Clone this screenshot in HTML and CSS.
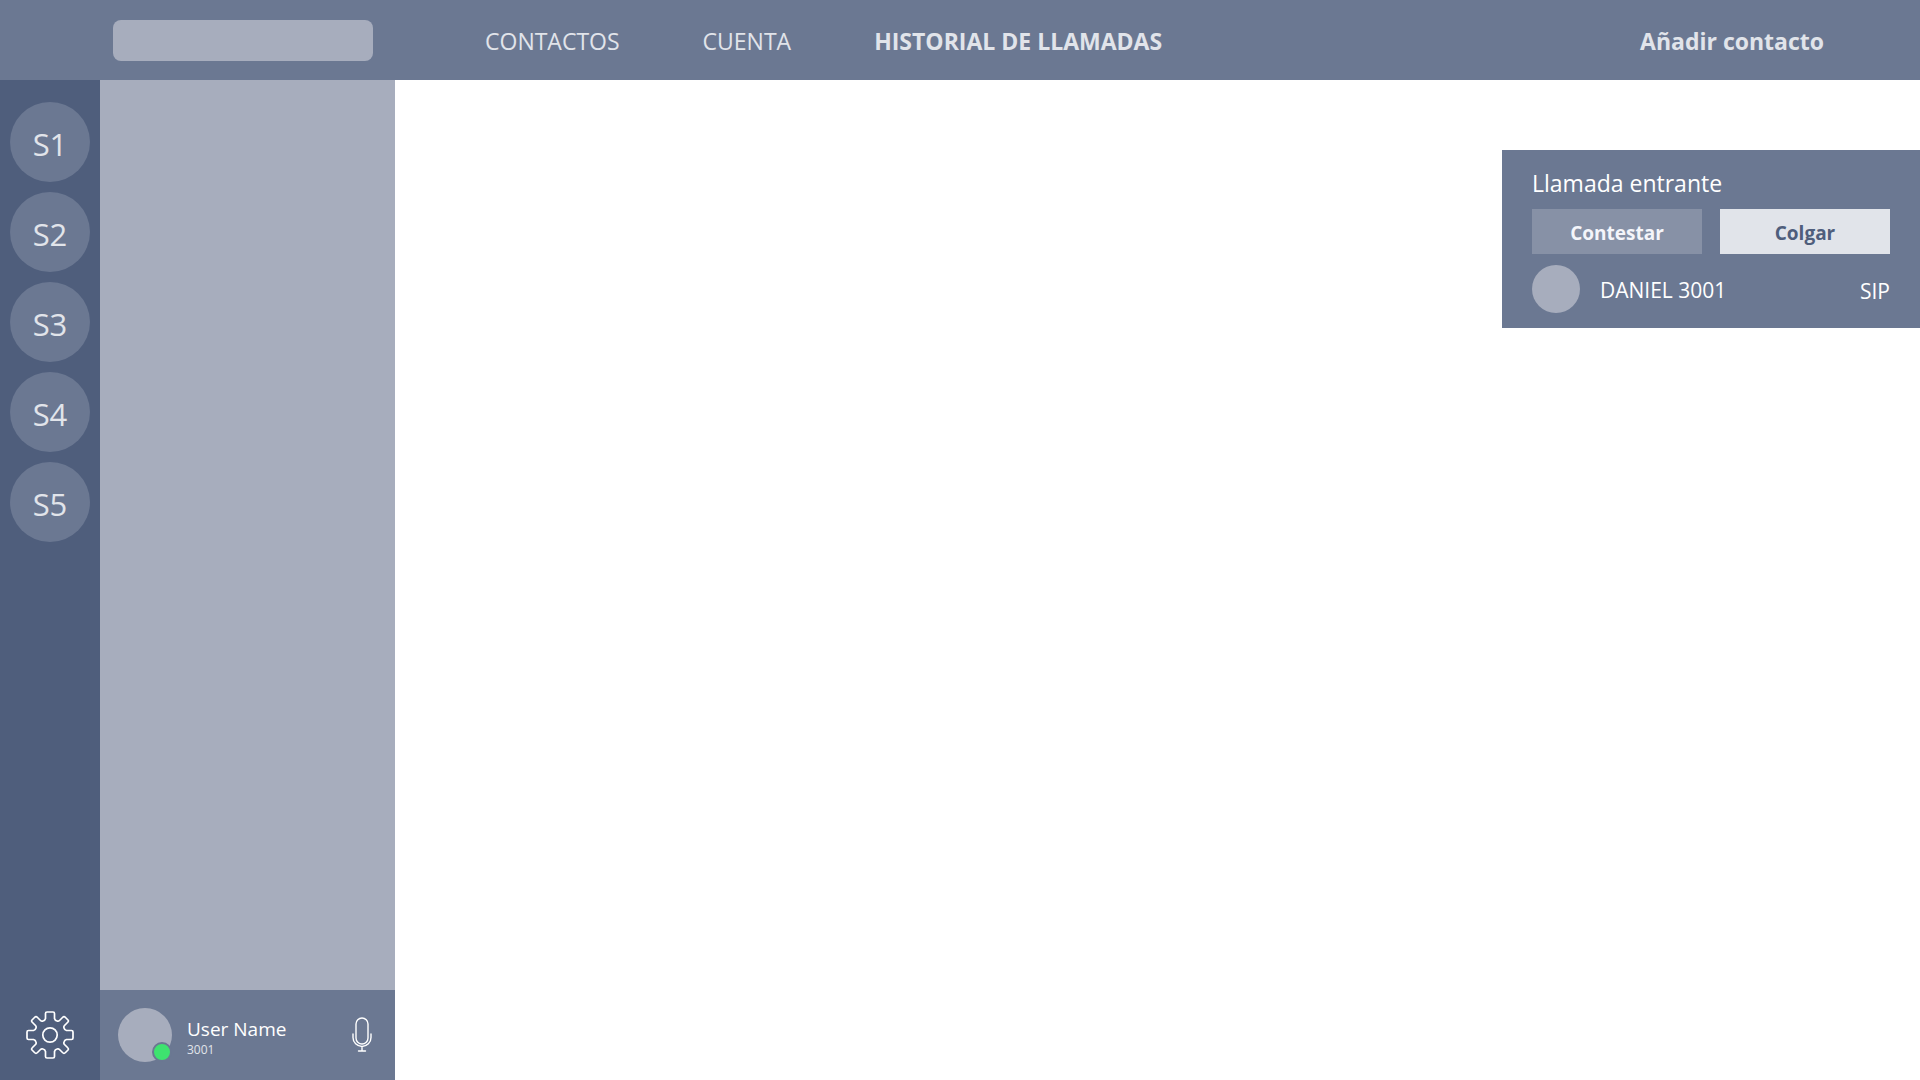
FILE: index.html
```html
<!DOCTYPE html>
<html lang="es">
<head>
<meta charset="utf-8">
<title>Llamadas</title>
<link rel="stylesheet" href="styles.css">
</head>
<body>
<div class="app">
  <header class="topbar">
    <input class="search" type="search" aria-label="Buscar">
    <nav class="menu">
      <a class="menu-link" href="#contactos">CONTACTOS</a>
      <a class="menu-link" href="#cuenta">CUENTA</a>
      <a class="menu-link menu-link-active" href="#historial">HISTORIAL DE LLAMADAS</a>
    </nav>
    <button class="add-contact" type="button">Añadir contacto</button>
  </header>
  <div class="body">
    <aside class="rail">
      <nav class="servers">
        <button class="server" type="button">S1</button>
        <button class="server" type="button">S2</button>
        <button class="server" type="button">S3</button>
        <button class="server" type="button">S4</button>
        <button class="server" type="button">S5</button>
      </nav>
      <button class="icon-button" type="button" aria-label="Ajustes">
        <svg width="50" height="50" viewBox="-25 -25 50 50" fill="none" stroke="#fff" stroke-width="1.7" stroke-linejoin="round">
          <circle r="7.2"/>
          <path d="M-4.500-21.500Q-4.500-23-3-23H3Q4.500-23 4.500-21.500V-16.500Q5-14.500 7-14Q8.500-13.500 9.500-14.500L12.500-17.500Q14-19 15.500-17.500L18-15Q19-14 17.500-12.500L14.500-9.500Q13.500-8.500 14-7Q14.500-5 16.500-4.500H21.500Q23-4.500 23-3V3Q23 4.500 21.500 4.500H16.500Q14.500 5 14 7Q13.500 8.500 14.500 9.500L17.500 12.500Q19 14 18 15L15.500 17.500Q14 19 12.500 17.500L9.500 14.500Q8.500 13.500 7 14Q5 14.500 4.500 16.500V21.500Q4.500 23 3 23H-3Q-4.500 23-4.500 21.500V16.500Q-5 14.500-7 14Q-8.500 13.500-9.500 14.500L-12.500 17.500Q-14 19-15.500 17.500L-18 15Q-19 14-17.500 12.500L-14.500 9.500Q-13.500 8.500-14 7Q-14.500 5-16.500 4.500H-21.500Q-23 4.500-23 3V-3Q-23-4.500-21.500-4.500H-16.500Q-14.500-5-14-7Q-13.500-8.500-14.500-9.500L-17.500-12.500Q-19-14-18-15L-15.500-17.500Q-14-19-12.500-17.500L-9.500-14.500Q-8.500-13.500-7-14Q-5-14.500-4.500-16.500Z"/>
        </svg>
      </button>
    </aside>
    <aside class="sidebar">
      <div class="list"></div>
      <footer class="profile">
        <div class="avatar"><span class="status"></span></div>
        <div class="identity">
          <span class="name">User Name</span>
          <span class="extension">3001</span>
        </div>
        <button class="icon-button" type="button" aria-label="Micrófono">
          <svg width="20" height="36" viewBox="0 0 20 36" fill="none" stroke="#fff" stroke-width="1.4" stroke-linecap="round">
            <rect x="4" y="1" width="12" height="26" rx="6"/>
            <path d="M1 17V20.500A9 9 0 0 0 19 20.500V17M10 29.500V34M6.500 34H13.500"/>
          </svg>
        </button>
      </footer>
    </aside>
    <main class="content">
      <section class="call" aria-labelledby="call-title">
        <h1 class="call-title" id="call-title">Llamada entrante</h1>
        <div class="actions">
          <button class="action action-answer" type="button">Contestar</button>
          <button class="action action-hangup" type="button">Colgar</button>
        </div>
        <div class="caller">
          <span class="caller-avatar"></span>
          <span class="caller-name">DANIEL 3001</span>
          <span class="caller-line">SIP</span>
        </div>
      </section>
    </main>
  </div>
</div>
</body>
</html>
```
FILE: styles.css
```css
* { box-sizing: border-box; }

body {
  margin: 0;
  font-family: "Segoe UI", "Open Sans", "Noto Sans", sans-serif;
  color: #fff;
}

button {
  margin: 0;
  padding: 0;
  border: 0;
  font: inherit;
  color: inherit;
  background: none;
  cursor: pointer;
}

svg { display: block; }

.app {
  display: flex;
  flex-direction: column;
  min-height: 100vh;
  background: #fff;
}

.topbar {
  display: flex;
  align-items: center;
  height: 80px;
  padding: 0 96px 0 113px;
  background: #6b7892;
  color: #e1e4ea;
  font-size: 23px;
  line-height: 32px;
}

.search {
  width: 260px;
  height: 41px;
  padding: 0 12px;
  border: 0;
  border-radius: 8px;
  background: #a7adbd;
  font: inherit;
  appearance: none;
}

.menu {
  display: flex;
  flex: 1;
  gap: 83px;
  padding: 2px 0 0 112px;
}

.menu-link {
  color: inherit;
  text-decoration: none;
  white-space: nowrap;
}

.menu-link-active { font-weight: 700; }

.add-contact {
  padding-top: 2px;
  font-weight: 700;
  white-space: nowrap;
}

.body {
  display: flex;
  flex: 1;
}

.rail {
  display: flex;
  flex-direction: column;
  align-items: center;
  justify-content: space-between;
  width: 100px;
  padding: 22px 0 20px;
  background: #4f5e7c;
}

.servers {
  display: flex;
  flex-direction: column;
  gap: 10px;
}

.server {
  width: 80px;
  height: 80px;
  padding-top: 4px;
  border-radius: 50%;
  background: #6b7892;
  color: #e1e4ea;
  font-size: 31px;
}

.sidebar {
  display: flex;
  flex-direction: column;
  width: 295px;
  background: #a7adbd;
}

.list { flex: 1; }

.profile {
  display: flex;
  align-items: center;
  gap: 15px;
  height: 90px;
  padding: 0 23px 0 18px;
  background: #6b7892;
}

.avatar {
  position: relative;
  width: 54px;
  height: 54px;
  border-radius: 50%;
  background: #a7adbd;
}

.status {
  position: absolute;
  right: 0;
  bottom: 0;
  width: 20px;
  height: 20px;
  border: 2px solid #6b7892;
  border-radius: 50%;
  background: #3ee36f;
}

.identity {
  display: flex;
  flex: 1;
  flex-direction: column;
  padding-top: 3px;
}

.name {
  font-size: 19px;
  line-height: 26px;
}

.extension {
  color: #e1e4ea;
  font-size: 12px;
  line-height: 16px;
}

.content {
  display: flex;
  flex: 1;
  align-items: flex-start;
  justify-content: flex-end;
  padding-top: 70px;
}

.call {
  width: 418px;
  padding: 17px 30px 15px;
  background: #6b7892;
}

.call-title {
  margin: 0 0 10px;
  font-size: 23px;
  font-weight: 400;
  line-height: 32px;
}

.actions {
  display: grid;
  grid-template-columns: 1fr 1fr;
  gap: 18px;
  margin-bottom: 11px;
}

.action {
  height: 45px;
  padding-top: 2px;
  font-size: 19px;
  font-weight: 700;
}

.action-answer {
  background: #8791a6;
  color: #f4f5fa;
}

.action-hangup {
  background: #e1e4ea;
  color: #4f5e7c;
}

.caller {
  display: flex;
  align-items: center;
  gap: 20px;
  font-size: 21px;
  line-height: 28px;
}

.caller-avatar {
  width: 48px;
  height: 48px;
  border-radius: 50%;
  background: #a7adbd;
}

.caller-name {
  flex: 1;
  padding-top: 2px;
}

.caller-line { padding-top: 4px; }
```
